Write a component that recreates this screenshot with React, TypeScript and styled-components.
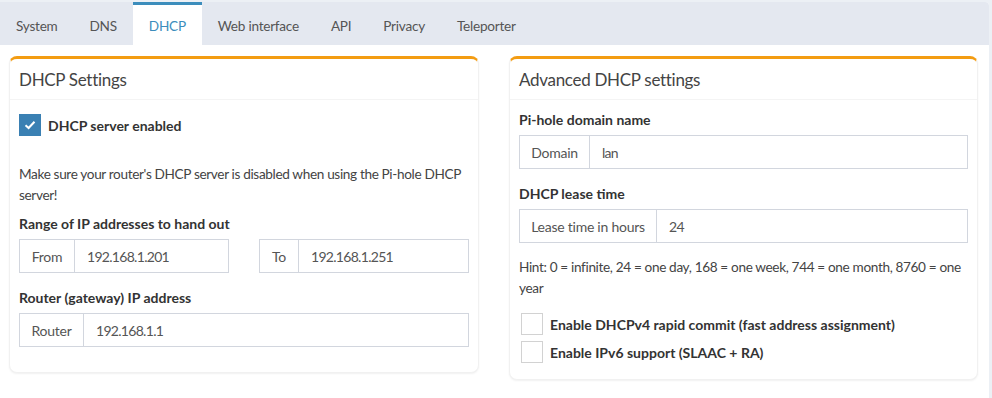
import styled, { createGlobalStyle } from 'styled-components';

const GlobalStyle = createGlobalStyle`
  html, body {
    margin: 0;
    padding: 0;
    background: #ecf0f5;
  }
  body {
    font-family: Lato, "Liberation Sans", sans-serif;
    font-size: 13.6px;
    letter-spacing: -0.25px;
    color: #444;
  }
  * {
    box-sizing: border-box;
  }
`;

const Page = styled.div`
  width: 992px;
  height: 398px;
  padding-top: 2px;
  padding-right: 3px;
  overflow: hidden;
`;

const TabsBox = styled.div`
  background: #fff;
  border-top-right-radius: 4px;
  height: 100%;
`;

const TabBar = styled.ul`
  display: flex;
  margin: 0;
  padding: 0;
  list-style: none;
  background: #e4e8f0;
  border-top-right-radius: 4px;
  height: 43px;
`;

const Tab = styled.li<{ $active?: boolean }>`
  display: flex;
  align-items: center;
  justify-content: center;
  padding: 2px 16px 0;
  height: 43px;
  border-top: 3px solid ${(p) => (p.$active ? '#3c8dbc' : 'transparent')};
  background: ${(p) => (p.$active ? '#fff' : 'transparent')};
  color: ${(p) => (p.$active ? '#3c8dbc' : '#555')};
`;

const Content = styled.div`
  display: grid;
  grid-template-columns: 470px 469px;
  column-gap: 30px;
  align-items: start;
  padding: 11px 0 0 9px;
`;

const Card = styled.div`
  background: #fff;
  border: 1px solid #f1f1f1;
  border-top: 3px solid #f39c12;
  border-radius: 8px;
  box-shadow: 0 1px 2px rgba(0, 0, 0, 0.06);
`;

const CardHeader = styled.div`
  height: 41px;
  display: flex;
  align-items: center;
  padding: 0 9px;
  border-bottom: 1px solid #f4f4f4;
  font-size: 17px;
  letter-spacing: -0.3px;
  color: #444;
`;

const CardBody = styled.div<{ $pt: number; $pb: number }>`
  padding: ${(p) => p.$pt}px 9px ${(p) => p.$pb}px;
`;

const FieldLabel = styled.div<{ $top?: number }>`
  font-size: 14px;
  font-weight: 700;
  letter-spacing: 0;
  color: #333;
  line-height: 20px;
  margin-top: ${(p) => p.$top ?? 0}px;
  margin-bottom: 5px;
`;

const Note = styled.p<{ $top?: number }>`
  margin: ${(p) => p.$top ?? 0}px 0 0;
  line-height: 21px;
  letter-spacing: -0.35px;
  color: #444;
`;

const InputRow = styled.div`
  display: grid;
  grid-template-columns: 210px 210px;
  column-gap: 30px;
`;

const InputGroup = styled.div`
  display: flex;
  height: 34px;
  border: 1px solid #d2d6de;
`;

const Addon = styled.div<{ $width: number }>`
  flex: 0 0 ${(p) => p.$width}px;
  display: flex;
  align-items: center;
  justify-content: center;
  border-right: 1px solid #d2d6de;
  font-size: 14px;
  color: #555;
`;

const Value = styled.div`
  flex: 1;
  display: flex;
  align-items: center;
  padding: 0 12px;
  font-size: 14px;
  letter-spacing: -0.7px;
  color: #555;
`;

const CheckRow = styled.label<{ $top?: number; $inset?: number }>`
  display: flex;
  align-items: center;
  gap: 7px;
  margin-top: ${(p) => p.$top ?? 0}px;
  padding-left: ${(p) => p.$inset ?? 0}px;
  font-size: 14px;
  font-weight: 700;
  letter-spacing: 0;
  color: #333;
`;

const Box = styled.span<{ $checked?: boolean }>`
  width: 22px;
  height: 22px;
  display: inline-flex;
  align-items: center;
  justify-content: center;
  background: ${(p) => (p.$checked ? '#3a80b3' : '#fff')};
  border: 1px solid ${(p) => (p.$checked ? '#3a80b3' : '#d2d2d2')};
`;

function Check({ checked }: { checked?: boolean }) {
  return (
    <Box $checked={checked}>
      {checked && (
        <svg width="12" height="10" viewBox="0 0 12 10">
          <path d="M1.5 5.2 L4.6 8 L10.5 1.8" fill="none" stroke="#fff" strokeWidth="2" />
        </svg>
      )}
    </Box>
  );
}

function Field({ addon, width, value }: { addon: string; width: number; value: string }) {
  return (
    <InputGroup>
      <Addon $width={width}>{addon}</Addon>
      <Value>{value}</Value>
    </InputGroup>
  );
}

const tabs = ['System', 'DNS', 'DHCP', 'Web interface', 'API', 'Privacy', 'Teleporter'];

export default function App() {
  return (
    <Page>
      <GlobalStyle />
      <TabsBox>
        <TabBar>
          {tabs.map((t) => (
            <Tab key={t} $active={t === 'DHCP'}>
              {t}
            </Tab>
          ))}
        </TabBar>
        <Content>
          <Card>
            <CardHeader>DHCP Settings</CardHeader>
            <CardBody $pt={14} $pb={25}>
              <CheckRow>
                <Check checked />
                DHCP server enabled
              </CheckRow>
              <Note $top={28}>
                Make sure your router's DHCP server is disabled when using the Pi-hole DHCP server!
              </Note>
              <FieldLabel $top={8}>Range of IP addresses to hand out</FieldLabel>
              <InputRow>
                <Field addon="From" width={55} value="192.168.1.201" />
                <Field addon="To" width={39} value="192.168.1.251" />
              </InputRow>
              <FieldLabel $top={15}>Router (gateway) IP address</FieldLabel>
              <Field addon="Router" width={64} value="192.168.1.1" />
            </CardBody>
          </Card>
          <Card>
            <CardHeader>Advanced DHCP settings</CardHeader>
            <CardBody $pt={10} $pb={16}>
              <FieldLabel>Pi-hole domain name</FieldLabel>
              <Field addon="Domain" width={70} value="lan" />
              <FieldLabel $top={15}>DHCP lease time</FieldLabel>
              <Field addon="Lease time in hours" width={137} value="24" />
              <Note $top={14}>
                Hint: 0 = infinite, 24 = one day, 168 = one week, 744 = one month, 8760 = one year
              </Note>
              <CheckRow $top={14} $inset={2}>
                <Check />
                Enable DHCPv4 rapid commit (fast address assignment)
              </CheckRow>
              <CheckRow $top={6} $inset={2}>
                <Check />
                Enable IPv6 support (SLAAC + RA)
              </CheckRow>
            </CardBody>
          </Card>
        </Content>
      </TabsBox>
    </Page>
  );
}
